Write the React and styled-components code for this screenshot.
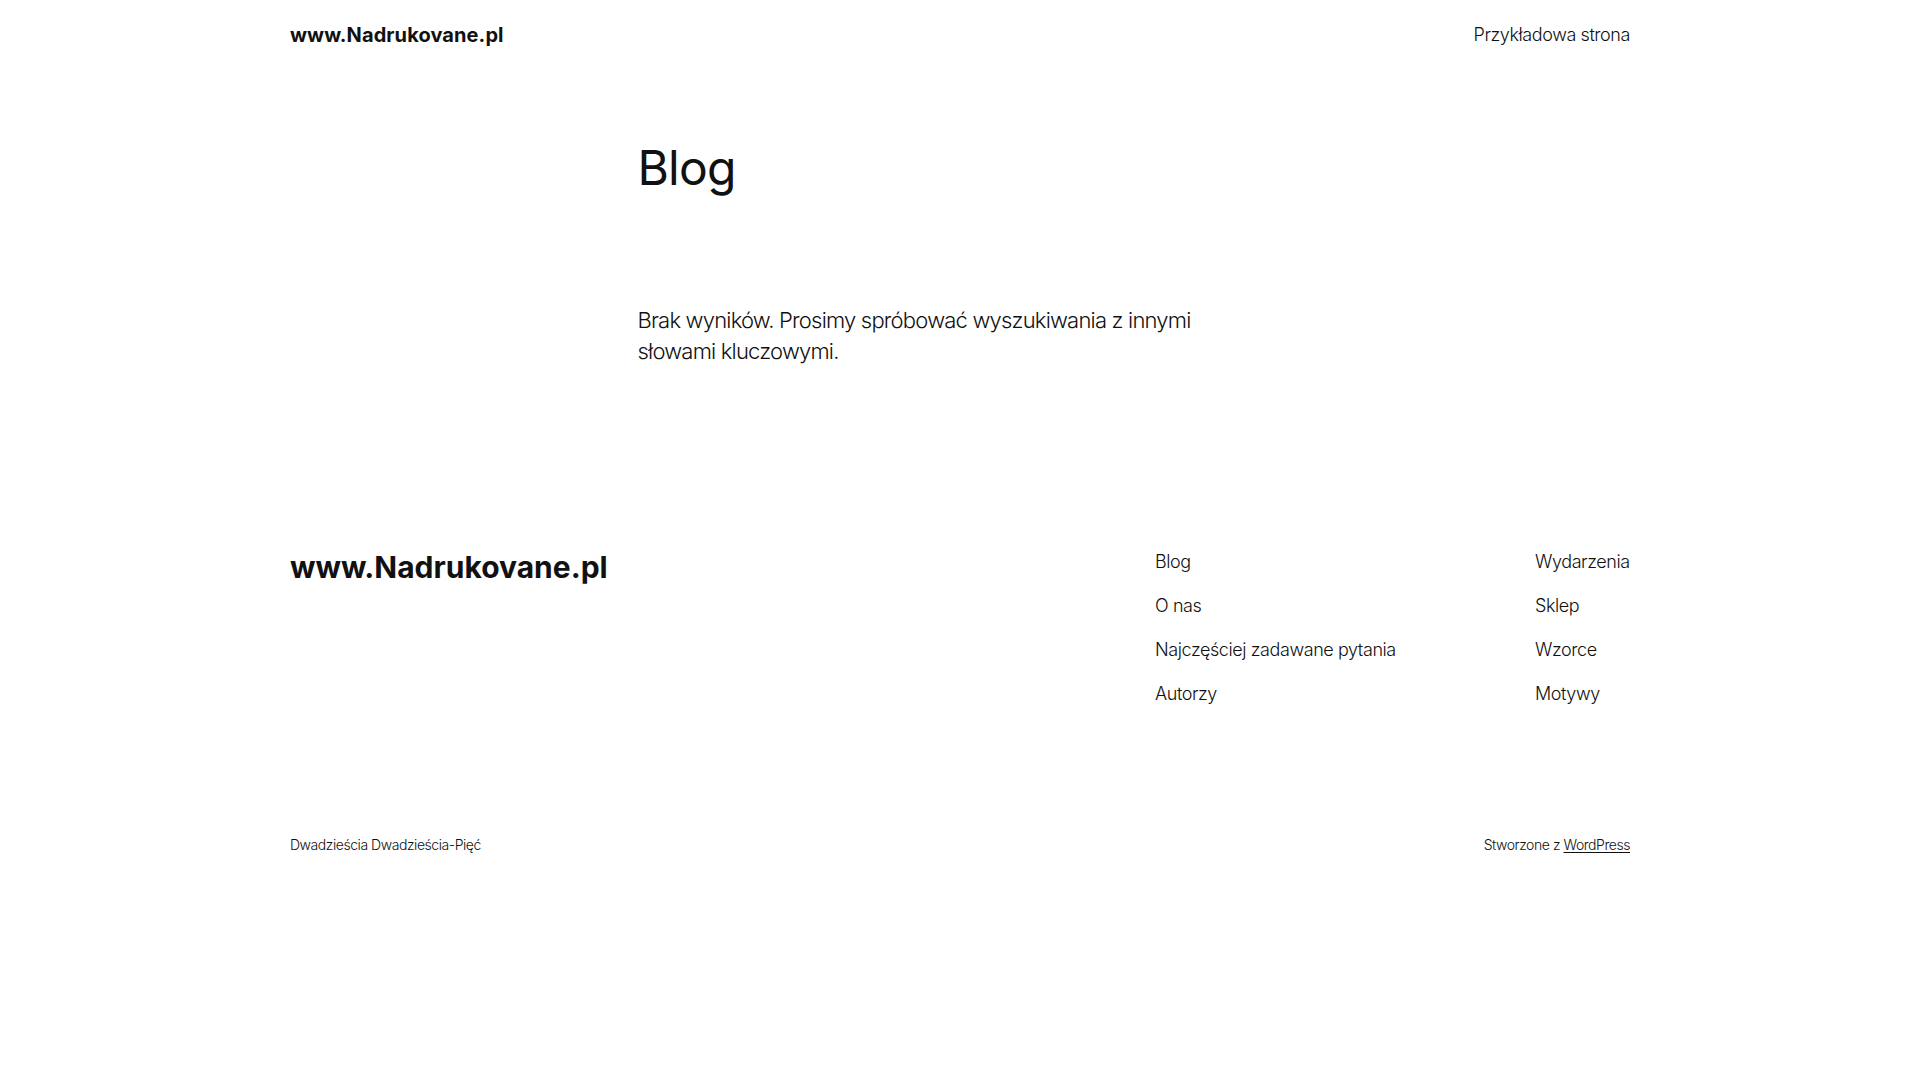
import React from "react";
import styled, { createGlobalStyle } from "styled-components";

const GlobalStyle = createGlobalStyle`
  html, body { margin: 0; padding: 0; background: #ffffff; }
  body {
    font-family: Inter, "Noto Sans", "DejaVu Sans", sans-serif;
    color: #111111;
    -webkit-font-smoothing: antialiased;
  }
  * { box-sizing: border-box; }
`;

const Page = styled.div`
  width: 1340px;
  margin: 0 auto;
  display: flex;
  flex-direction: column;
`;

const Header = styled.header`
  height: 69px;
  display: flex;
  align-items: center;
  justify-content: space-between;
`;

const SiteTitle = styled.a`
  font-size: ${(p) => p.$size}px;
  font-weight: 700;
  line-height: 1.2;
  color: #111111;
  text-decoration: none;
  letter-spacing: ${(p) => p.$spacing}px;
`;

const NavLink = styled.a`
  font-size: 18px;
  font-weight: 300;
  line-height: 25px;
  color: #111111;
  text-decoration: none;
  letter-spacing: -0.42px;
`;

const Main = styled.main`
  width: 645px;
  margin: 0 auto;
  padding-top: 72px;
`;

const PageTitle = styled.h1`
  margin: 0;
  font-size: 48px;
  font-weight: 400;
  line-height: 54px;
  letter-spacing: -0.8px;
`;

const Notice = styled.p`
  margin: 110px 0 0;
  max-width: 600px;
  font-size: 22px;
  font-weight: 300;
  line-height: 31px;
  letter-spacing: -0.8px;
`;

const Footer = styled.footer`
  margin-top: 182px;
  display: flex;
  flex-direction: column;
`;

const FooterTop = styled.div`
  display: flex;
  justify-content: space-between;
  align-items: flex-start;
`;

const FooterBrand = styled.div`
  margin-top: 0;
`;

const FooterNav = styled.nav`
  display: grid;
  grid-template-columns: 380px 95px;
`;

const NavColumn = styled.ul`
  margin: 0;
  padding: 0;
  list-style: none;
  display: flex;
  flex-direction: column;
  gap: 19px;
`;

const Bottom = styled.div`
  margin-top: 129px;
  display: flex;
  justify-content: space-between;
  align-items: center;
  font-size: 14px;
  font-weight: 300;
  line-height: 20px;
  letter-spacing: -0.45px;
`;

const Credit = styled.span``;

const CreditLink = styled.a`
  color: #111111;
  text-decoration: underline;
  text-underline-offset: 2px;
`;

const col1 = ["Blog", "O nas", "Najczęściej zadawane pytania", "Autorzy"];
const col2 = ["Wydarzenia", "Sklep", "Wzorce", "Motywy"];

export default function App() {
  return (
    <>
      <GlobalStyle />
      <Page>
        <Header>
          <SiteTitle href="#" $size={20} $spacing={0.1}>
            www.Nadrukovane.pl
          </SiteTitle>
          <NavLink href="#">Przykładowa strona</NavLink>
        </Header>
        <Main>
          <PageTitle>Blog</PageTitle>
          <Notice>
            Brak wyników. Prosimy spróbować wyszukiwania z innymi słowami
            kluczowymi.
          </Notice>
        </Main>
        <Footer>
          <FooterTop>
            <FooterBrand>
              <SiteTitle href="#" $size={30} $spacing={0}>
                www.Nadrukovane.pl
              </SiteTitle>
            </FooterBrand>
            <FooterNav>
              <NavColumn>
                {col1.map((t) => (
                  <li key={t}>
                    <NavLink href="#">{t}</NavLink>
                  </li>
                ))}
              </NavColumn>
              <NavColumn>
                {col2.map((t) => (
                  <li key={t}>
                    <NavLink href="#">{t}</NavLink>
                  </li>
                ))}
              </NavColumn>
            </FooterNav>
          </FooterTop>
          <Bottom>
            <Credit>Dwadzieścia Dwadzieścia-Pięć</Credit>
            <Credit>
              Stworzone z <CreditLink href="#">WordPress</CreditLink>
            </Credit>
          </Bottom>
        </Footer>
      </Page>
    </>
  );
}
